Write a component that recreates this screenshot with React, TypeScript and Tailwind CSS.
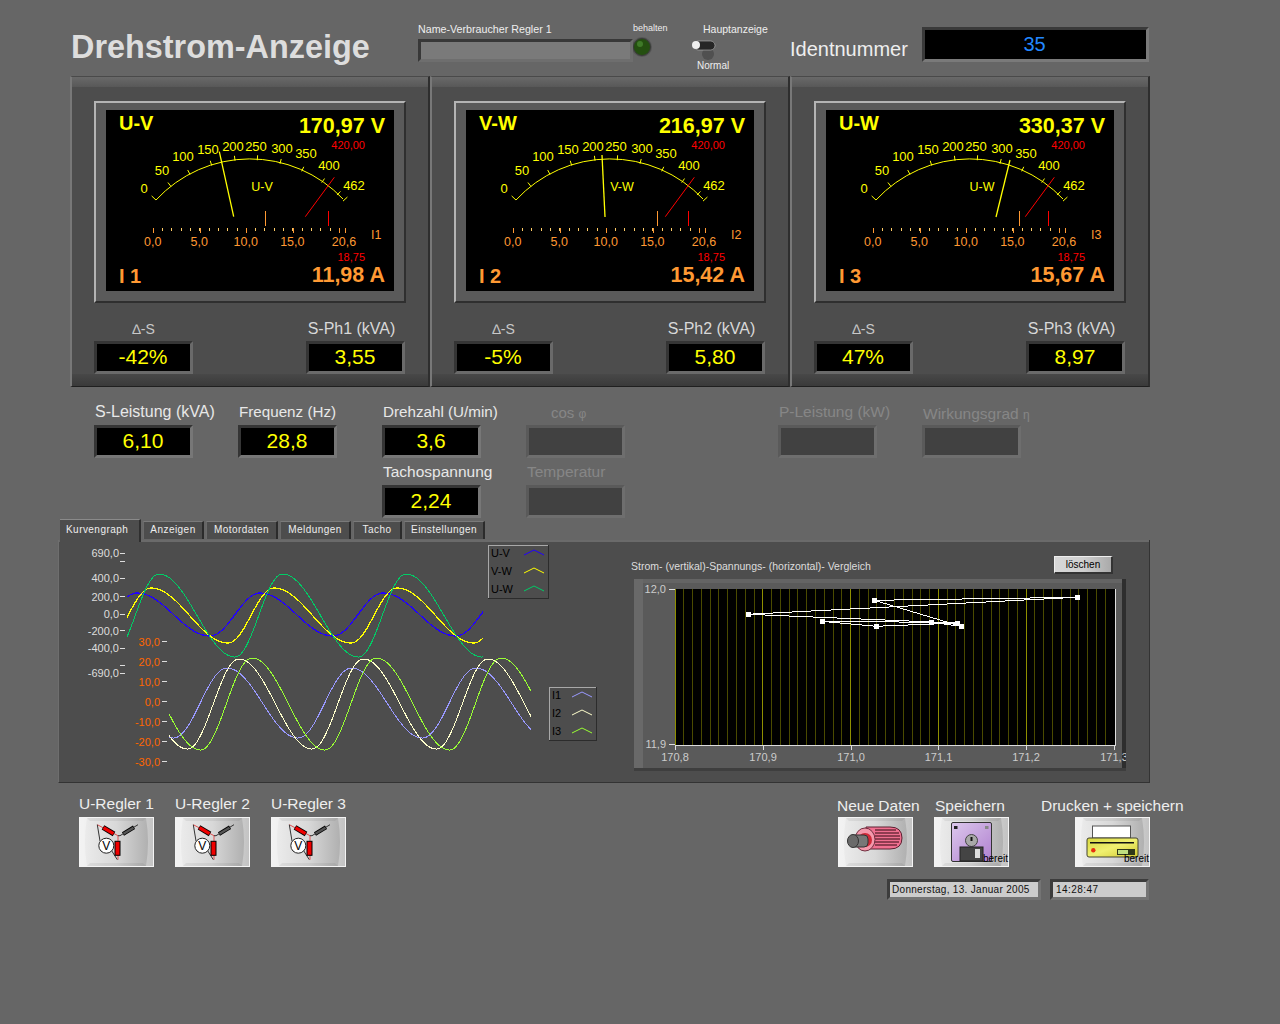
import React from "react";

// skewed wave: falls slowly from peak to trough, rises fast back
function wave(from: number, to: number, peak: number, period: number, fall: number, center: number, amp: number) {
  const pts: string[] = [];
  for (let x = from; x <= to; x++) {
    const t = (((x - peak) % period) + period) % period;
    const c = t < fall ? Math.cos((Math.PI * t) / fall) : Math.cos(Math.PI * (1 + (t - fall) / (period - fall)));
    pts.push(`${x},${(center - amp * c).toFixed(1)}`);
  }
  return pts.join(" ");
}

const arcTicks = [65, 84, 105.7, 129, 151.3, 174, 195.7, 215.7, 231];
const scaleLabels: [string, number, number][] = [
  ["0", 38, 83],
  ["50", 56, 65],
  ["100", 77, 51],
  ["150", 102, 44],
  ["200", 127, 41],
  ["250", 150, 41],
  ["300", 176, 43],
  ["350", 200, 48],
  ["400", 223, 60],
  ["462", 248, 80],
];
const ampLabels: [string, number][] = [
  ["0,0", 46.7],
  ["5,0", 93.3],
  ["10,0", 139.7],
  ["15,0", 186.3],
  ["20,6", 238],
];

function arcTick(x: number, len: number) {
  const cx = 143;
  const cy = 178;
  const r = 128;
  const y = cy - Math.sqrt(r * r - (x - cx) * (x - cx));
  const dx = (x - cx) / r;
  const dy = (y - cy) / r;
  return <line key={x} x1={x} y1={y} x2={x + dx * len} y2={y + dy * len} stroke="#ffff00" />;
}

type MeterProps = {
  name: string;
  volts: string;
  amps: string;
  phase: string;
  current: string;
  needle: [number, number, number, number];
  marker: number;
};

function Meter({ name, volts, amps, phase, current, needle, marker }: MeterProps) {
  const minor: number[] = [];
  for (let i = 0; i <= 20; i++) minor.push(47.3 + i * 9.3);
  return (
    <div className="w-[312px] h-[202px] bg-[#5a5a5a] border-2 border-t-[#b4b4b4] border-l-[#b4b4b4] border-r-[#2f2f2f] border-b-[#2f2f2f] pl-[10px] pt-[7px]">
      <svg width="288" height="181" className="block bg-black">
        <text x="13" y="20" fontSize="20" fontWeight="700" fill="#ffff00">{name}</text>
        <text x="279" y="22.5" fontSize="21.5" fontWeight="700" fill="#ffff00" textAnchor="end">{volts} V</text>
        <text x="259" y="39" fontSize="11" fill="#ff0000" textAnchor="end">420,00</text>
        {scaleLabels.map(([t, x, y]) => (
          <text key={t} x={x} y={y} fontSize="13" fill="#ffff00" textAnchor="middle">{t}</text>
        ))}
        <text x="156" y="81" fontSize="12.5" fill="#ffff00" textAnchor="middle">{name}</text>
        <path d="M50 90 A128 128 0 0 1 237 89" fill="none" stroke="#ffff00" />
        {arcTicks.map((x) => arcTick(x, 5))}
        {arcTick(50, 6)}
        {arcTick(237, 6)}
        <line x1={needle[0]} y1={needle[1]} x2={needle[2]} y2={needle[3]} stroke="#ffff00" strokeWidth="1.3" />
        <line x1="228.3" y1="67.3" x2="199.3" y2="106.7" stroke="#ff0000" />
        <g shapeRendering="crispEdges">
          <line x1={marker} y1="101" x2={marker} y2="116" stroke="#ff9933" />
          <line x1="222" y1="101" x2="222" y2="116" stroke="#ff0000" />
          {minor.map((x) => (
            <line key={x} x1={x} y1="118" x2={x} y2="120.5" stroke="#ffcc66" />
          ))}
          {[47.3, 94.3, 140, 187.3, 233.3, 239].map((x) => (
            <line key={x} x1={x} y1="118" x2={x} y2="122.5" stroke="#ff9933" />
          ))}
        </g>
        {ampLabels.map(([t, x]) => (
          <text key={t} x={x} y="136" fontSize="12.5" fill="#ff9933" textAnchor="middle">{t}</text>
        ))}
        <text x="265" y="129" fontSize="12.5" fill="#ff9933">{phase}</text>
        <text x="259" y="151" fontSize="11" fill="#ff0000" textAnchor="end">18,75</text>
        <text x="13" y="173" fontSize="20" fontWeight="700" fill="#ff9933">{current}</text>
        <text x="279" y="172" fontSize="21.5" fontWeight="700" fill="#ff9933" textAnchor="end">{amps} A</text>
      </svg>
    </div>
  );
}

function ValueBox({ value, ring }: { value?: string; ring?: boolean }) {
  if (!value) {
    return <div className="w-[99px] h-[33px] border-[3px] border-t-[#5a5a5a] border-l-[#5a5a5a] border-r-[#6e6e6e] border-b-[#6e6e6e] bg-[#414141]" />;
  }
  return (
    <div
      className={`w-[99px] h-[33px] border-[3px] border-t-[#353535] border-l-[#353535] bg-black flex items-center justify-center pb-[2px] pr-[1px] text-[21px] text-[#ffff00] ${
        ring ? "border-r-[#6a6a6a] border-b-[#6a6a6a]" : "border-r-[#777777] border-b-[#777777]"
      }`}
    >
      {value}
    </div>
  );
}

const panels = [
  { name: "U-V", volts: "170,97", amps: "11,98", phase: "I1", current: "I 1", needle: [113.3, 41.7, 127.7, 106.7], marker: 159, delta: "-42%", s: "S-Ph1 (kVA)", sv: "3,55" },
  { name: "V-W", volts: "216,97", amps: "15,42", phase: "I2", current: "I 2", needle: [136, 45, 139, 107], marker: 191, delta: "-5%", s: "S-Ph2 (kVA)", sv: "5,80" },
  { name: "U-W", volts: "330,37", amps: "15,67", phase: "I3", current: "I 3", needle: [184, 50, 170, 107], marker: 193, delta: "47%", s: "S-Ph3 (kVA)", sv: "8,97" },
];

const tabs = [
  { label: "Anzeigen", w: "w-[61px]" },
  { label: "Motordaten", w: "w-[72px]" },
  { label: "Meldungen", w: "w-[71px]" },
  { label: "Tacho", w: "w-[49px]" },
  { label: "Einstellungen", w: "w-[81px]" },
];

const uTicks: [string, number][] = [
  ["690,0", 553],
  ["", 561.5],
  ["400,0", 578],
  ["200,0", 596.5],
  ["0,0", 614],
  ["-200,0", 630.5],
  ["-400,0", 648],
  ["", 665],
  ["-690,0", 673],
];
const iTicks: [string, number][] = [
  ["30,0", 641.5],
  ["20,0", 661.5],
  ["10,0", 681.5],
  ["0,0", 701.5],
  ["-10,0", 721.5],
  ["-20,0", 741.5],
  ["-30,0", 761.5],
];

function Legend({ x, y, w, h, rows, lineX }: { x: number; y: number; w: number; h: number; rows: [string, string][]; lineX: number }) {
  return (
    <g>
      <rect x={x + 0.5} y={y + 0.5} width={w} height={h} fill="#4d4d4d" stroke="#2c2c2c" shapeRendering="crispEdges" />
      <path d={`M${x + 0.5} ${y + h} V${y + 0.5} H${x + w}`} fill="none" stroke="#a8a8a8" shapeRendering="crispEdges" />
      {rows.map(([t, c], i) => (
        <g key={t}>
          <text x={x + 3} y={y + 12 + i * 18} fontSize="11" fill="#000">{t}</text>
          <polyline points={`${lineX},${y + 10 + i * 18} ${lineX + 10},${y + 5 + i * 18} ${lineX + 20},${y + 10 + i * 18}`} fill="none" stroke={c} />
        </g>
      ))}
    </g>
  );
}

function CurveChart() {
  return (
    <svg width="571" height="240" viewBox="59 542 571 240" className="block">
      {uTicks.map(([t, y]) => (
        <g key={y}>
          {t && <text x="119" y={y + 4} fontSize="11" fill="#dddddd" textAnchor="end">{t}</text>}
          <line x1="120" y1={y} x2="125" y2={y} stroke="#dddddd" shapeRendering="crispEdges" />
        </g>
      ))}
      <g fill="none" shapeRendering="crispEdges">
        <polyline points={wave(127, 483, 137, 123, 73, 614.5, 21.5)} stroke="#2200ff" strokeWidth="1.25" />
        <polyline points={wave(127, 483, 151, 123, 77, 615.5, 27.5)} stroke="#ffff00" strokeWidth="1.25" />
        <polyline points={wave(127, 483, 159, 123.5, 76, 615.5, 41.5)} stroke="#00cc66" />
        <polyline points={wave(169, 531, 227, 124.5, 71, 703, 35)} stroke="#9999ff" />
        <polyline points={wave(169, 531, 239, 124.5, 73, 704, 45)} stroke="#ffffcc" />
        <polyline points={wave(169, 531, 252, 124.5, 73, 704, 46)} stroke="#99ff33" />
      </g>
      {iTicks.map(([t, y]) => (
        <g key={y}>
          <text x="160" y={y + 4} fontSize="11" fill="#ff6600" textAnchor="end">{t}</text>
          <line x1="162" y1={y} x2="167" y2={y} stroke="#dddddd" shapeRendering="crispEdges" />
        </g>
      ))}
      <Legend x={488} y={545} w={60} h={53} lineX={524} rows={[["U-V", "#2200ff"], ["V-W", "#ffff00"], ["U-W", "#00cc66"]]} />
      <Legend x={549} y={687} w={47} h={53} lineX={572} rows={[["I1", "#9999ff"], ["I2", "#ffffcc"], ["I3", "#99ff33"]]} />
    </svg>
  );
}

function XYChart() {
  const grid: number[] = [];
  for (let i = 0; i < 50; i++) grid.push(i);
  const line = "874.4,600.3 1077,597.3 747.7,614.3 957,623 876,626.3 821.7,621.3 931,622.3 961,626.3 874.4,600.3";
  const marks = [
    [1077, 597.3],
    [874.4, 600.3],
    [961, 626.3],
    [957, 623],
    [747.7, 614.3],
    [931, 622.3],
    [821.7, 621.3],
    [876, 626.3],
  ];
  const xLabels: [string, number][] = [
    ["170,8", 675],
    ["170,9", 763],
    ["171,0", 851],
    ["171,1", 938.5],
    ["171,2", 1026],
    ["171,3", 1114],
  ];
  return (
    <svg width="492" height="192" viewBox="634 579 492 192" className="block">
      <rect x="634" y="579" width="492" height="192" fill="#5a5a5a" />
      <rect x="634" y="579" width="492" height="4" fill="#646464" />
      <rect x="634" y="579" width="9" height="192" fill="#696969" />
      <rect x="1122" y="579" width="4" height="192" fill="#2e2e2e" />
      <rect x="634" y="768" width="492" height="3" fill="#3e3e3e" />
      <rect x="675" y="589" width="440" height="156" fill="#000" />
      <g shapeRendering="crispEdges">
        {grid.map((i) => (
          <line
            key={i}
            x1={675 + i * 8.78}
            y1="589"
            x2={675 + i * 8.78}
            y2="745"
            stroke={i % 10 === 0 ? "#8f8f00" : "#4a4a00"}
          />
        ))}
        <path d="M675 745.5 H1115.5 V589" fill="none" stroke="#dddddd" />
        <polyline points={line} fill="none" stroke="#ffffff" />
        {marks.map(([x, y]) => (
          <rect key={x} x={Math.round(x) - 2} y={Math.round(y) - 2} width="5" height="5" fill="#ffffff" />
        ))}
        <line x1="669" y1="589.5" x2="675" y2="589.5" stroke="#dddddd" />
        <line x1="669" y1="744.5" x2="675" y2="744.5" stroke="#dddddd" />
        {xLabels.map(([t, x]) => (
          <line key={t} x1={x} y1="745" x2={x} y2="750" stroke="#dddddd" />
        ))}
      </g>
      <text x="666" y="593" fontSize="11" fill="#cccccc" textAnchor="end">12,0</text>
      <text x="666" y="748" fontSize="11" fill="#cccccc" textAnchor="end">11,9</text>
      {xLabels.map(([t, x]) => (
        <text key={t} x={x} y="761" fontSize="11" fill="#cccccc" textAnchor="middle">{t}</text>
      ))}
    </svg>
  );
}

function ButtonFace({ children, ready }: { children: React.ReactNode; ready?: boolean }) {
  return (
    <div className="relative w-[75px] h-[50px] border border-[#f4f4f4] bg-linear-to-r from-[#eeeeee] via-[#d8d8d8] to-[#aaaaaa]">
      <svg width="73" height="48" viewBox="1 1 73 48" className="block">
        <path d="M1 1 H8 Q4 25 8 49 H1 Z" fill="#ffffff" fillOpacity="0.3" />
        <path d="M74 1 H67 Q71 25 67 49 H74 Z" fill="#ffffff" fillOpacity="0.3" />
        <path d="M8 1 H67 L64 4 H11 Z M8 49 H67 L64 46 H11 Z" fill="#000000" fillOpacity="0.06" />
        {children}
      </svg>
      {ready && <span className="absolute right-0 bottom-[1px] text-[10px] leading-[12px] text-black">bereit</span>}
    </div>
  );
}

function StarIcon() {
  return (
    <g>
      <g fill="none" strokeWidth="1">
        <path d="M18.3 7.7 L39 18.7 V42.7" stroke="#e05050" />
        <path d="M41 18.7 L59 7.7 M39 18.7 L41 18.7" stroke="#333333" />
        <path d="M18.3 7.7 L21 24 M32 32.7 L38.3 42.7" stroke="#333333" />
      </g>
      <line x1="24" y1="10.3" x2="35" y2="17" stroke="#000" strokeWidth="5" />
      <line x1="24.5" y1="10.7" x2="34.5" y2="16.6" stroke="#f00000" strokeWidth="3.4" />
      <line x1="44" y1="17" x2="55" y2="10.3" stroke="#000" strokeWidth="4" />
      <line x1="44.5" y1="16.7" x2="54.5" y2="10.7" stroke="#555555" strokeWidth="2.4" />
      <rect x="36" y="24.3" width="5" height="14" fill="#f00000" stroke="#000" />
      <circle cx="27.3" cy="28.7" r="7.5" fill="#ffffff" stroke="#222222" />
      <text x="27.3" y="33" fontSize="12" textAnchor="middle" fill="#000">V</text>
    </g>
  );
}

function MotorIcon() {
  return (
    <g>
      <path d="M28 10 H52 Q64 10 64 21 Q64 32 52 32 H28 Z" fill="#f07090" stroke="#5a2030" />
      <g stroke="#300810" strokeWidth="1">
        <line x1="37" y1="13" x2="58" y2="13" />
        <line x1="37" y1="16" x2="61" y2="16" />
        <line x1="37" y1="19" x2="62" y2="19" />
        <line x1="37" y1="22" x2="62" y2="22" />
        <line x1="37" y1="25" x2="61" y2="25" />
        <line x1="37" y1="28" x2="59" y2="28" />
      </g>
      <ellipse cx="27" cy="22.5" rx="10" ry="11.5" fill="#f498ac" stroke="#703040" />
      <circle cx="27" cy="23" r="7" fill="#d02838" />
      <rect x="13" y="18" width="17" height="12" rx="4" fill="#777777" stroke="#333333" />
      <ellipse cx="15" cy="24" rx="5.5" ry="6.5" fill="#6a6a6a" stroke="#333333" />
    </g>
  );
}

function FloppyIcon() {
  return (
    <g>
      <defs>
        <linearGradient id="floppy" x1="0" x2="1" y1="0" y2="1">
          <stop offset="0" stopColor="#dcc8ec" />
          <stop offset="1" stopColor="#b080d0" />
        </linearGradient>
      </defs>
      <rect x="17.5" y="5.5" width="40" height="39" rx="1.5" fill="url(#floppy)" stroke="#333333" />
      <rect x="20" y="9" width="3.5" height="3" fill="#222222" />
      <rect x="51" y="9" width="3.5" height="3" fill="#888888" />
      <circle cx="37.5" cy="23.5" r="6" fill="#a8a8a8" stroke="#444444" />
      <rect x="36.5" y="20" width="2" height="4" fill="#111111" />
      <rect x="26" y="30" width="23" height="14" fill="#444444" stroke="#222222" />
      <rect x="41" y="32" width="5" height="9" fill="#dddddd" />
    </g>
  );
}

function PrinterIcon() {
  return (
    <g>
      <defs>
        <linearGradient id="printer" x1="0" x2="1" y1="0" y2="1">
          <stop offset="0" stopColor="#d8d840" />
          <stop offset="0.5" stopColor="#f0f070" />
          <stop offset="1" stopColor="#d0c830" />
        </linearGradient>
      </defs>
      <rect x="17.5" y="9" width="38" height="12" fill="#ffffff" stroke="#555555" />
      <rect x="12" y="21" width="51" height="19" rx="2" fill="url(#printer)" stroke="#444433" />
      <rect x="15" y="25" width="44" height="1.5" fill="#111111" />
      <circle cx="18.3" cy="33.3" r="2.2" fill="#e83010" />
      <rect x="42" y="32" width="18" height="6" fill="#303818" />
      <rect x="43" y="33" width="10" height="4" fill="#c0e080" />
    </g>
  );
}

export default function App() {
  return (
    <div className="w-[1280px] h-[1024px] bg-[#666666] font-['Liberation_Sans',Arial,sans-serif] text-[#eeeeee] overflow-hidden">
      {/* header */}
      <div className="flex h-[76px] pl-[71px]">
        <div className="w-[347px] pt-[28px] text-[32.4px] leading-[38px] font-bold text-[#dddddd] whitespace-nowrap">Drehstrom-Anzeige</div>
        <div className="w-[215px] pt-[22px]">
          <div className="text-[10.7px] leading-[14px] mb-[3px] whitespace-nowrap">Name-Verbraucher Regler 1</div>
          <div className="h-[23px] border-[3px] border-t-[#383838] border-l-[#383838] border-r-[#6e6e6e] border-b-[#6e6e6e] bg-[#7a7a7a]" />
        </div>
        <div className="w-[58px] pt-[22px]">
          <div className="text-[9px] leading-[12px] mb-[3px] whitespace-nowrap">behalten</div>
          <svg width="24" height="24" className="block">
            <circle cx="9" cy="10" r="10" fill="#555555" />
            <circle cx="9" cy="10" r="8.5" fill="#244f10" stroke="#3a3a3a" />
            <circle cx="7" cy="7" r="3" fill="#3f7a28" />
          </svg>
        </div>
        <div className="w-[99px] relative">
          <div className="absolute left-[12px] top-[22px] text-[10.5px] leading-[14px] whitespace-nowrap">Hauptanzeige</div>
          <svg width="30" height="24" className="absolute left-[0px] top-[38px]">
            <ellipse cx="17" cy="16" rx="6" ry="6" fill="#505050" />
            <rect x="3" y="3" width="21" height="9" rx="4.5" fill="#262626" stroke="#bbbbbb" strokeWidth="0.6" />
            <circle cx="5" cy="7" r="4" fill="#eeeeee" />
          </svg>
          <div className="absolute left-[6px] top-[59px] text-[10px] leading-[14px] whitespace-nowrap">Normal</div>
        </div>
        <div className="w-[132px] pt-[37px] text-[20px] leading-[24px] whitespace-nowrap">Identnummer</div>
        <div className="mt-[27px] w-[227px] h-[35px] border-[3px] border-t-[#3a3a3a] border-l-[#3a3a3a] border-r-[#7a7a7a] border-b-[#7a7a7a] bg-black flex items-center justify-center pb-[2px] pr-[2px] text-[20px] text-[#2288ff]">
          35
        </div>
      </div>

      {/* three meter panels */}
      <div className="flex ml-[70px] w-[1080px] h-[311px]">
        {panels.map((p) => (
          <div key={p.name} className="w-[360px] h-[311px] flex flex-col bg-[#4d4d4d] border-l-2 border-l-[#787878] border-r-2 border-r-[#2e2e2e] border-t border-t-[#4a4a4a] border-b border-b-[#1f1f1f]">
            <div className="h-[10px] bg-linear-to-b from-[#696969] to-[#585858]" />
            <div className="pl-[22px] pt-[14px]">
              <Meter name={p.name} volts={p.volts} amps={p.amps} phase={p.phase} current={p.current} needle={p.needle as [number, number, number, number]} marker={p.marker} />
            </div>
            <div className="flex flex-1 pl-[22px] pt-[14px]">
              <div className="w-[212px]">
                <div className="w-[99px] h-[24px] text-center text-[14px] leading-[24px] text-[#c8c8c8]">∆-S</div>
                <ValueBox value={p.delta} ring />
              </div>
              <div className="w-[99px]">
                <div className="h-[24px] -ml-[8px] text-center text-[16px] leading-[24px] text-[#d8d8d8] whitespace-nowrap">{p.s}</div>
                <ValueBox value={p.sv} ring />
              </div>
            </div>
            <div className="h-[12px] bg-linear-to-b from-[#484848] to-[#3a3a3a]" />
          </div>
        ))}
      </div>

      {/* readouts */}
      <div className="grid grid-cols-[144px_144px_144px_252px_144px_144px] h-[133px] pl-[94px] pt-[14px] text-[15.5px] leading-[20px]">
        <div>
          <div className="h-[24px] pl-[1px] pt-[1px] text-[16px] whitespace-nowrap text-[#e8e8e8]">S-Leistung (kVA)</div>
          <ValueBox value="6,10" />
        </div>
        <div>
          <div className="h-[24px] pl-[1px] pt-[1px] text-[15.2px] whitespace-nowrap text-[#e8e8e8]">Frequenz (Hz)</div>
          <ValueBox value="28,8" />
        </div>
        <div>
          <div className="h-[24px] pl-[1px] pt-[1px] text-[15.2px] whitespace-nowrap text-[#e8e8e8]">Drehzahl (U/min)</div>
          <ValueBox value="3,6" />
          <div className="h-[24px] mt-[3px] pl-[1px] pt-[1px] whitespace-nowrap text-[#e8e8e8]">Tachospannung</div>
          <ValueBox value="2,24" />
        </div>
        <div>
          <div className="h-[24px] pl-[25px] pt-[2px] whitespace-nowrap text-[#868686] text-[15px]">cos <span className="text-[12px]">φ</span></div>
          <ValueBox />
          <div className="h-[24px] mt-[3px] pl-[1px] pt-[1px] whitespace-nowrap text-[#868686]">Temperatur</div>
          <ValueBox />
        </div>
        <div>
          <div className="h-[24px] pl-[1px] pt-[1px] whitespace-nowrap text-[#868686]">P-Leistung (kW)</div>
          <ValueBox />
        </div>
        <div>
          <div className="h-[24px] pl-[1px] pt-[3px] whitespace-nowrap text-[#868686]">Wirkungsgrad <span className="text-[12px]">η</span></div>
          <ValueBox />
        </div>
      </div>

      {/* tabs */}
      <div className="flex items-end h-[20px] ml-[60px] gap-[2px] text-[10px] tracking-[0.45px] text-[#eeeeee]">
        <div className="w-[81px] h-[23px] -mb-[2px] relative z-10 bg-[#4d4d4d] border-t border-t-[#8a8a8a] border-r-2 border-r-[#2f2f2f] flex items-center pl-[6px] pb-[4px]">Kurvengraph</div>
        {tabs.map((t) => (
          <div key={t.label} className={`${t.w} h-[18px] mb-[1px] bg-[#4d4d4d] border-t border-t-[#7a7a7a] border-l border-l-[#6a6a6a] border-r-2 border-r-[#2b2b2b] flex items-center justify-center pb-[2px]`}>
            {t.label}
          </div>
        ))}
      </div>

      {/* graphs */}
      <div className="ml-[58px] w-[1092px] h-[243px] bg-[#4d4d4d] border-r border-r-[#333333] border-b border-b-[#333333] border-l border-l-[#6e6e6e] flex flex-col">
        <div className="h-[2px] bg-[#6a6a6a] shrink-0" />
        <div className="flex flex-1">
          <CurveChart />
          <div className="w-[510px]">
            <div className="flex items-start h-[37px] pl-[1px]">
              <span className="w-[423px] pt-[17px] text-[10.5px] leading-[14px] text-[#dddddd] whitespace-nowrap">Strom- (vertikal)-Spannungs- (horizontal)- Vergleich</span>
              <div className="mt-[14px] w-[59px] h-[18px] flex items-center justify-center bg-linear-to-r from-[#d8d8d8] via-[#cfcfcf] to-[#aaaaaa] border-t border-l border-t-[#eeeeee] border-l-[#eeeeee] border-r-2 border-b-2 border-r-[#333333] border-b-[#333333] text-[10px] text-black">löschen</div>
            </div>
            <div className="pl-[4px]">
              <XYChart />
            </div>
          </div>
        </div>
      </div>

      {/* buttons */}
      <div className="flex ml-[79px] mt-[8px] text-[15.5px] leading-[20px]">
        <div className="flex gap-[21px]">
          {["U-Regler 1", "U-Regler 2", "U-Regler 3"].map((t) => (
            <div key={t} className="w-[75px]">
              <div className="h-[26px] pt-[3px] whitespace-nowrap">{t}</div>
              <ButtonFace><StarIcon /></ButtonFace>
            </div>
          ))}
        </div>
        <div className="ml-[492px] w-[96px]">
          <div className="h-[26px] mt-[2px] pt-[3px] -ml-[1px] whitespace-nowrap">Neue Daten</div>
          <div className="-mt-[2px]"><ButtonFace><MotorIcon /></ButtonFace></div>
        </div>
        <div className="w-[141px]">
          <div className="h-[26px] mt-[2px] pt-[3px] ml-[1px] whitespace-nowrap">Speichern</div>
          <div className="-mt-[2px]"><ButtonFace ready><FloppyIcon /></ButtonFace></div>
        </div>
        <div className="w-[75px]">
          <div className="h-[26px] mt-[2px] pt-[3px] -ml-[34px] whitespace-nowrap">Drucken + speichern</div>
          <div className="-mt-[2px]"><ButtonFace ready><PrinterIcon /></ButtonFace></div>
        </div>
      </div>

      {/* date + time */}
      <div className="flex ml-[887px] mt-[12px] gap-[9px] text-[10px] tracking-[0.3px] text-[#111111]">
        <div className="w-[154px] h-[21px] border-[3px] border-t-[#3c3c3c] border-l-[#3c3c3c] border-r-[#747474] border-b-[#747474] bg-[#cccccc] flex items-center pl-[2px] whitespace-nowrap">Donnerstag, 13. Januar 2005</div>
        <div className="w-[99px] h-[21px] border-[3px] border-t-[#3c3c3c] border-l-[#3c3c3c] border-r-[#747474] border-b-[#747474] bg-[#cccccc] flex items-center pl-[3px] tracking-[0.45px]">14:28:47</div>
      </div>
    </div>
  );
}
